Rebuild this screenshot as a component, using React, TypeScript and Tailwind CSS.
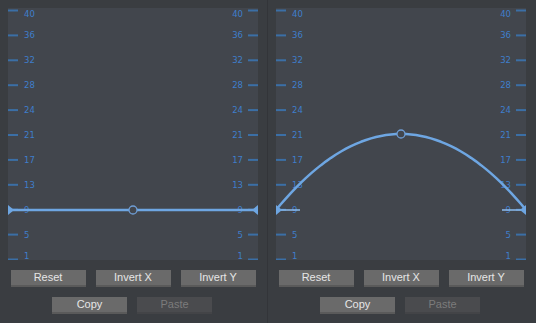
import React from "react";

const labels = ["40", "36", "32", "28", "24", "21", "17", "13", "9", "5", "1"];

type CurveProps = {
  kind: "flat" | "arch";
};

function Graph({ kind }: CurveProps) {
  const W = 250;
  const H = 252;
  const baseY = 202;
  const peakY = 126;
  // parabola through the two ends and the peak
  const pts: string[] = [];
  for (let i = 0; i <= 50; i++) {
    const x = (W * i) / 50;
    const t = (x - 125) / 125;
    const y = kind === "flat" ? baseY : baseY - (baseY - peakY) * (1 - t * t);
    pts.push(`${x.toFixed(2)},${y.toFixed(2)}`);
  }
  const cy = kind === "flat" ? baseY : peakY;

  return (
    <div className="w-[250px] h-[252px] bg-[#42464d] overflow-hidden">
      <svg width={W} height={H} viewBox={`0 0 ${W} ${H}`} className="block">
        {labels.map((l, i) => {
          const c = 2.5 + 24.9 * i;
          const ty = Math.min(Math.max(c, 6), 248);
          return (
            <g key={l}>
              <rect x={0} y={c - 1} width={10} height={2} fill="#3b6fa6" />
              <rect x={240} y={c - 1} width={10} height={2} fill="#3b6fa6" />
              <text
                x={16}
                y={ty}
                dominantBaseline="central"
                fill="#3f7ecb"
                fontSize={8.5}
                fontFamily='"DejaVu Sans", sans-serif'
              >
                {l}
              </text>
              <text
                x={235}
                y={ty}
                dominantBaseline="central"
                textAnchor="end"
                fill="#3f7ecb"
                fontSize={8.5}
                fontFamily='"DejaVu Sans", sans-serif'
              >
                {l}
              </text>
            </g>
          );
        })}
        {kind === "arch" && (
          <g stroke="#8dbcef" strokeWidth={1.5}>
            <line x1={0} y1={baseY} x2={24} y2={baseY} />
            <line x1={226} y1={baseY} x2={250} y2={baseY} />
          </g>
        )}
        <polyline
          points={pts.join(" ")}
          fill="none"
          stroke="#6ea6e2"
          strokeWidth={2.5}
          strokeLinejoin="round"
        />
        <polygon points={`0,${baseY - 5} 6,${baseY} 0,${baseY + 5}`} fill="#6ea6e2" />
        <polygon points={`250,${baseY - 5} 244,${baseY} 250,${baseY + 5}`} fill="#6ea6e2" />
        <circle cx={125} cy={cy} r={4} fill="#42464d" stroke="#6f9ed6" strokeWidth={1.3} />
      </svg>
    </div>
  );
}

function Btn({ label, disabled }: { label: string; disabled?: boolean }) {
  return (
    <button
      className={
        disabled
          ? "w-[75px] h-[17px] bg-[#4a4b4e] border-b-2 border-[#434447] text-[#7c7c7c] text-[11px] leading-[15px]"
          : "w-[75px] h-[17px] bg-[#6a6a6a] border-b-2 border-[#5a5a5a] text-[#e6e6e6] text-[11px] leading-[15px]"
      }
      style={{ fontFamily: '"Liberation Sans", Arial, sans-serif' }}
    >
      {label}
    </button>
  );
}

function Panel({ kind, wide }: CurveProps & { wide?: boolean }) {
  return (
    <div className={`${wide ? "w-[268px]" : "w-[267px]"} h-full flex flex-col pt-[8px] pl-[8px]`}>
      <Graph kind={kind} />
      <div className="w-[250px] flex justify-center gap-[10px] mt-[10px]">
        <Btn label="Reset" />
        <Btn label="Invert X" />
        <Btn label="Invert Y" />
      </div>
      <div className="w-[250px] flex justify-center gap-[10px] mt-[10px] pr-[2px]">
        <Btn label="Copy" />
        <Btn label="Paste" disabled />
      </div>
    </div>
  );
}

export default function App() {
  return (
    <div className="w-[536px] h-[323px] bg-[#3a3d41] flex overflow-hidden">
      <Panel kind="flat" />
      <div className="w-px h-full bg-[#333539]" />
      <Panel kind="arch" />
    </div>
  );
}
